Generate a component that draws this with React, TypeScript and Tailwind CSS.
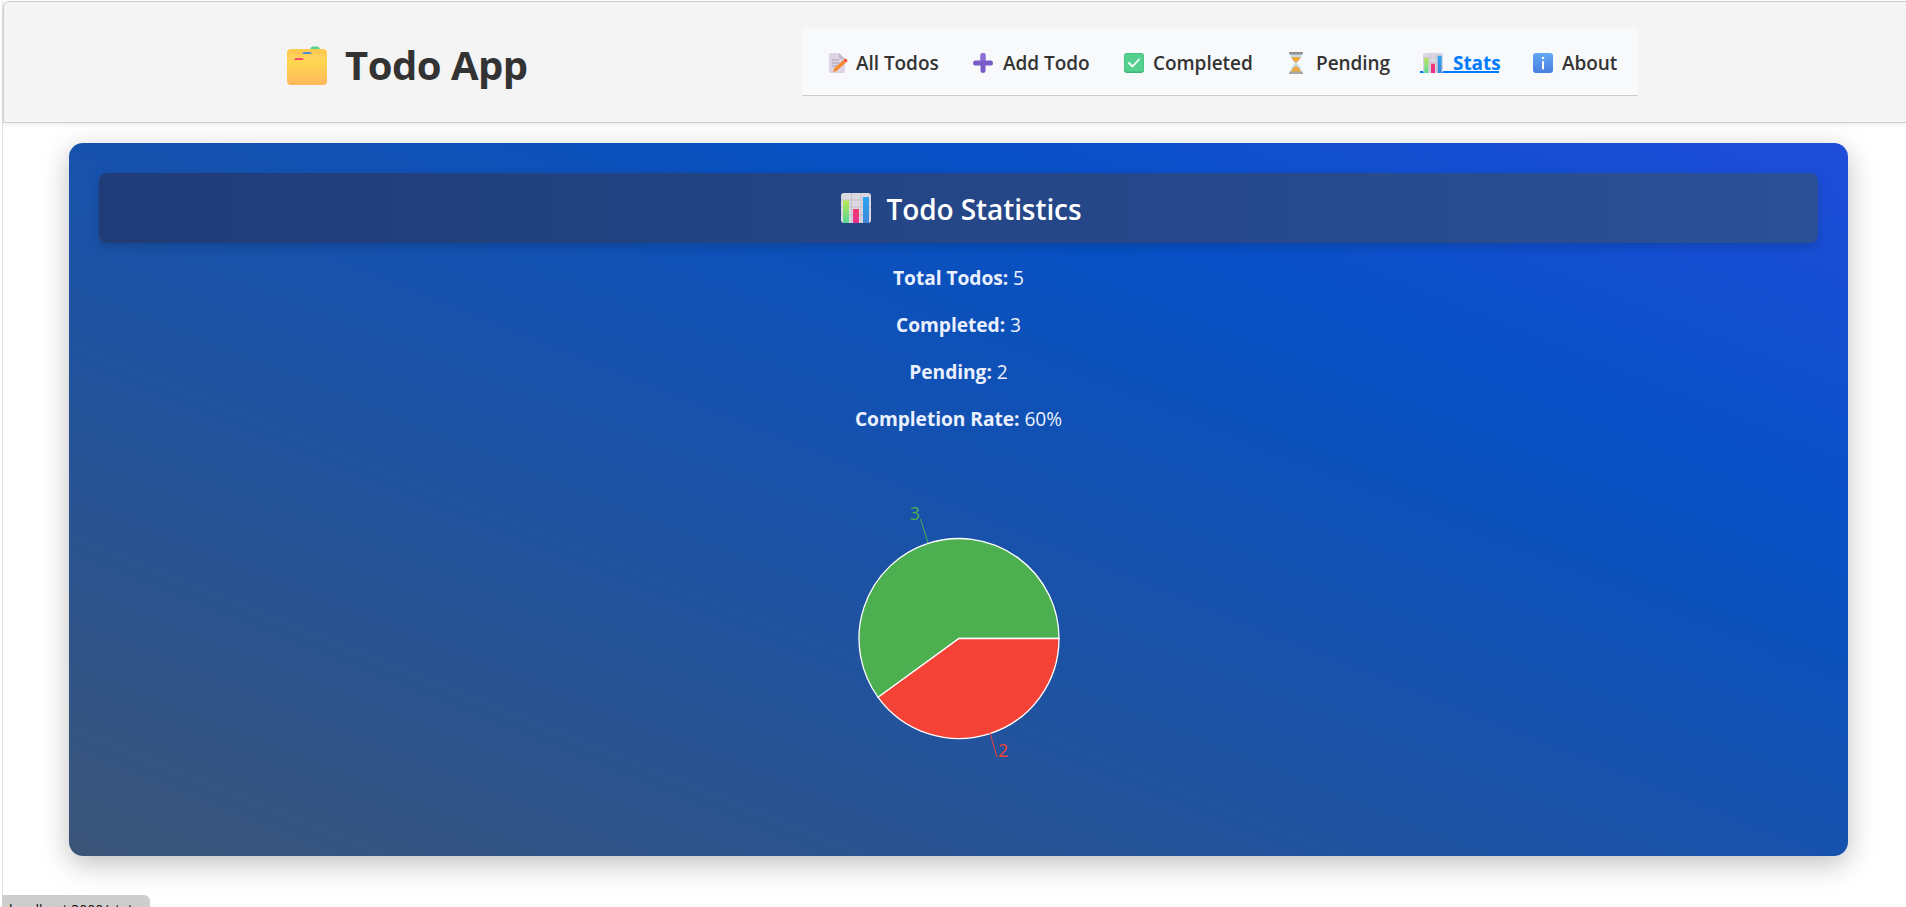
import React from "react";

const FolderIcon = () => (
  <svg width="40" height="39" viewBox="0 0 40 39" className="shrink-0">
    <defs>
      <linearGradient id="fg" x1="0" y1="0" x2="0" y2="1">
        <stop offset="0" stopColor="#ffd84f" />
        <stop offset="1" stopColor="#ffb75c" />
      </linearGradient>
    </defs>
    <path d="M23 3.500c.5-2 1.500-3 3-3h4c1.500 0 2.500 1 3 3z" fill="#57d48c" />
    <rect x="0" y="3" width="40" height="30" rx="4" fill="#ffc94f" />
    <path d="M15 9c.5-2 1-3 2.500-3h5c1.500 0 2 1 2.500 3z" fill="#4b8fd0" />
    <rect x="0" y="8" width="40" height="28" rx="4" fill="#ffd05a" />
    <path d="M7 15c.5-2 1-3 2.500-3h5c1.500 0 2 1 2.500 3z" fill="#f8486a" />
    <rect x="0" y="14" width="40" height="25" rx="4" fill="url(#fg)" />
  </svg>
);

const MemoIcon = () => (
  <svg width="20" height="20" viewBox="0 0 20 20" className="shrink-0">
    <path d="M1 1.500A1.500 1.500 0 0 1 2.500 0H11l6 6v12.500a1.500 1.500 0 0 1-1.500 1.500h-13A1.500 1.500 0 0 1 1 18.500z" fill="#ddd4e6" />
    <path d="M11 0l6 6h-4.500A1.500 1.500 0 0 1 11 4.500z" fill="#c3b8ce" />
    <path d="M4 7h7M4 10h8M4 13h6" stroke="#a79fb0" strokeWidth="1" />
    <path d="M6 15.500 15.500 7l2.500 2.500L8.500 18 5 19z" fill="#f58a2e" />
    <path d="M15.500 7l1-1c.6-.5 1.300-.5 1.800 0l.8.8c.5.6.5 1.200 0 1.700l-1.100 1z" fill="#f4523b" />
  </svg>
);

const PlusIcon = () => (
  <svg width="20" height="20" viewBox="0 0 20 20" className="shrink-0">
    <path d="M7.500 2a2.500 2 0 0 1 5 0v5.500H18a2 2.500 0 0 1 0 5h-5.500V18a2.500 2 0 0 1-5 0v-5.500H2a2 2.500 0 0 1 0-5h5.500z" fill="#7a5cc8" />
    <path d="M10 0a2.500 2 0 0 1 2.500 2v5.500h-5V2A2.500 2 0 0 1 10 0z" fill="#8d6fd8" />
  </svg>
);

const CheckIcon = () => (
  <svg width="20" height="20" viewBox="0 0 20 20" className="shrink-0">
    <rect width="20" height="20" rx="3" fill="#3fb279" />
    <rect x="0.500" y="0.500" width="19" height="18" rx="2.500" fill="#55d18f" />
    <path d="M5 10l3.500 3.500L15 6.500" fill="none" stroke="#fff" strokeWidth="1.800" strokeLinecap="round" strokeLinejoin="round" />
  </svg>
);

const HourglassIcon = () => (
  <svg width="16" height="22" viewBox="0 0 16 22" className="shrink-0">
    <path d="M2.500 2h11c0 5-3 6.500-4.500 9 1.500 2.500 4.500 4 4.500 9h-11c0-5 3-6.500 4.500-9-1.500-2.500-4.500-4-4.500-9z" fill="#c6dff0" />
    <path d="M3.500 5h9c-.5 3-3.200 4-4.500 6-1.300-2-4-3-4.500-6z" fill="#f2a93c" />
    <path d="M8 12.500l.5 2c2 1 4 2.500 4.500 5.500H3c.5-3 2.500-4.500 4.500-5.500z" fill="#f2a93c" />
    <rect x="1" y="0" width="14" height="2.500" rx="1" fill="#8f8f8f" />
    <rect x="1" y="19.500" width="14" height="2.500" rx="1" fill="#a6a6a6" />
  </svg>
);

const ChartIcon = ({ id, size }: { id: string; size: number }) => (
  <svg width={size} height={size} viewBox="0 0 30 30" className="shrink-0">
    <defs>
      <linearGradient id={`${id}g`} x1="0" y1="0" x2="0" y2="1">
        <stop offset="0" stopColor="#b8e84f" />
        <stop offset="1" stopColor="#58d69a" />
      </linearGradient>
      <linearGradient id={`${id}p`} x1="0" y1="0" x2="0" y2="1">
        <stop offset="0" stopColor="#f03a6e" />
        <stop offset="1" stopColor="#e92d90" />
      </linearGradient>
      <linearGradient id={`${id}b`} x1="0" y1="0" x2="0" y2="1">
        <stop offset="0" stopColor="#2ba6f0" />
        <stop offset="1" stopColor="#3f86d8" />
      </linearGradient>
    </defs>
    <rect width="30" height="30" rx="3" fill="#dcd8e2" />
    <path d="M10.500 0v30M20 0v30M0 7h30M0 14h30M0 22h30" stroke="#c4c0cb" strokeWidth="1" />
    <rect x="2" y="7.500" width="6" height="22.500" fill={`url(#${id}g)`} />
    <rect x="12" y="16" width="6" height="14" fill={`url(#${id}p)`} />
    <rect x="22" y="4" width="6" height="26" fill={`url(#${id}b)`} />
  </svg>
);

const InfoIcon = () => (
  <svg width="20" height="20" viewBox="0 0 20 20" className="shrink-0">
    <defs>
      <linearGradient id="ig" x1="0" y1="0" x2="0" y2="1">
        <stop offset="0" stopColor="#62a8f5" />
        <stop offset="1" stopColor="#4a7de0" />
      </linearGradient>
    </defs>
    <rect width="20" height="20" rx="3" fill="url(#ig)" />
    <circle cx="10" cy="5" r="1.300" fill="#fff" />
    <rect x="9" y="8" width="2" height="8.500" rx="0.800" fill="#fff" />
  </svg>
);

const items = [
  { label: "All Todos", icon: <MemoIcon />, slot: "w-[32px] pl-[4px]", text: "w-[83px]" },
  { label: "Add Todo", icon: <PlusIcon />, slot: "w-[32px] pl-[2px]", text: "w-[87px]" },
  { label: "Completed", icon: <CheckIcon />, slot: "w-[31px] pl-[2px]", text: "w-[101px]" },
  { label: "Pending", icon: <HourglassIcon />, slot: "w-[30px] pl-[2px]", text: "w-[72px]" },
  { label: "Stats", icon: <ChartIcon id="nav" size={20} />, slot: "w-[33px] pl-[3px]", text: "w-[46px]", active: true },
  { label: "About", icon: <InfoIcon />, slot: "w-[31px] pl-[2px]", text: "w-[59px]" },
];

const stats = [
  ["Total Todos:", "5"],
  ["Completed:", "3"],
  ["Pending:", "2"],
  ["Completion Rate:", "60%"],
];

export default function App() {
  return (
    <div className="relative h-[907px] overflow-hidden bg-white font-['Open_Sans','Noto_Sans',sans-serif]">
      <div className="ml-[2px] h-full border-l border-[#e4e4e4]">
        <header className="mt-px flex h-[122px] items-start rounded-tl-md border-t border-b border-l border-[#cfcfcf] bg-[#f4f4f4] text-[#333] shadow-[0_2px_5px_rgba(0,0,0,0.07)]">
          <div className="ml-[283px] mt-[43px] flex items-start gap-[18px]">
            <span className="mt-px flex">
              <FolderIcon />
            </span>
            <h1 className="w-[183px] whitespace-nowrap text-[40px] font-bold leading-none tracking-[-0.5px]">Todo App</h1>
          </div>
          <nav className="ml-[274px] mt-[26px] flex h-[68px] w-[836px] items-center gap-8 border-b border-[#cccccc] bg-[#f8f9fa] pl-[22px] pt-[3px]">
            {items.map((item) => (
              <a
                key={item.label}
                className={`flex h-[20px] items-center border-b-2 pt-[2px] ${
                  item.active ? "border-[#007bff] font-bold text-[#007bff]" : "border-transparent font-semibold text-[#333]"
                }`}
              >
                <span className={`flex shrink-0 items-center ${item.slot}`}>{item.icon}</span>
                <span className={`whitespace-nowrap text-[19px] leading-none tracking-[-0.05px] ${item.text}`}>{item.label}</span>
              </a>
            ))}
          </nav>
        </header>

        <main className="ml-[66px] mt-[20px] h-[713px] w-[1779px] rounded-[14px] bg-[linear-gradient(to_top_right,#3b5578_0%,#0650c4_72%,#1f4ddb_100%)] px-[30px] pt-[30px] shadow-[0_8px_28px_rgba(0,0,0,0.25)]">
          <div className="flex h-[70px] items-center justify-center gap-[16px] rounded-lg bg-[linear-gradient(to_right,#1f3c78,#2a5096)] pl-[5px] shadow-[0_4px_10px_rgba(0,0,0,0.15)]">
            <ChartIcon id="hd" size={30} />
            <h2 className="mt-[2px] whitespace-nowrap text-[28px] font-semibold leading-none tracking-[-0.1px] text-white">Todo Statistics</h2>
          </div>

          <div className="mt-[11px] flex flex-col items-center text-[19.2px] leading-[47px] text-[#eaf0fd]">
            {stats.map(([k, v]) => (
              <p key={k} className="h-[47px] whitespace-nowrap tracking-[-0.05px]">
                <strong className="font-bold">{k}</strong> {v}
              </p>
            ))}
          </div>

          <div className="mt-[46px] flex justify-center">
            <svg width="400" height="300" viewBox="0 0 400 300">
              <path d="M200 150.500 L300 150.500 A100 100 0 1 0 119.100 209.300 Z" fill="#4caf50" stroke="#fff" strokeWidth="1.300" />
              <path d="M200 150.500 L119.100 209.300 A100 100 0 0 0 300 150.500 Z" fill="#f44336" stroke="#fff" strokeWidth="1.300" />
              <path d="M169 55 L161.500 31" stroke="#4caf50" strokeWidth="1" fill="none" />
              <path d="M231 245 L238 269" stroke="#f44336" strokeWidth="1" fill="none" />
              <text x="161" y="32" textAnchor="end" fontSize="18" fill="#4caf50">3</text>
              <text x="239" y="269" textAnchor="start" fontSize="18" fill="#f44336">2</text>
            </svg>
          </div>
        </main>
      </div>

      <div className="absolute bottom-0 left-[2px] h-[12px] w-[148px] overflow-hidden rounded-tr-md bg-[#cdcdcd] pl-[7px] pt-[6px] text-[14px] leading-[17px] text-[#111]">
        localhost:3000/stats
      </div>
    </div>
  );
}
